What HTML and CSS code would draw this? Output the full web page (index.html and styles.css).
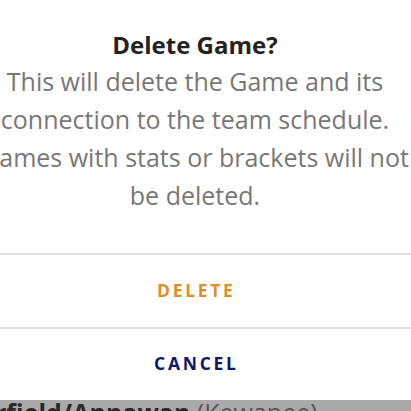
FILE: index.html
```html
<!DOCTYPE html>
<html lang="en">
<head>
<meta charset="utf-8">
<title>Delete Game?</title>
<link rel="stylesheet" href="styles.css">
</head>
<body>
<div class="dialog">
  <div class="content">
    <h2 class="title">Delete Game?</h2>
    <p class="message">This will delete the Game and its<br>connection to the team schedule.<br>Games with stats or brackets will not<br>be deleted.</p>
  </div>
  <div class="actions">
    <button class="action action-delete" type="button">DELETE</button>
    <button class="action action-cancel" type="button">CANCEL</button>
  </div>
</div>
<div class="behind">
  <span class="behind-name">rfield/Annawan</span> <span class="behind-note">(Kewanee)</span>
</div>
</body>
</html>
```

FILE: styles.css
```css
html, body {
  margin: 0;
  padding: 0;
  overflow: hidden;
  background: #ffffff;
}

body {
  font-family: "Open Sans", "Noto Sans", sans-serif;
  width: 411px;
  height: 411px;
}

.dialog {
  width: 460px;
  margin-left: -35px;
  background: #ffffff;
}

.content {
  padding: 30px 0 39px;
  text-align: center;
}

.title {
  margin: 0;
  font-size: 24px;
  line-height: 30px;
  font-weight: 700;
  color: #222222;
}

.message {
  margin: 2px 0 0;
  font-size: 25px;
  line-height: 38px;
  color: #777777;
  white-space: nowrap;
}

.actions {
  display: flex;
  flex-direction: column;
}

.action {
  display: block;
  width: 100%;
  height: 74px;
  margin: 0;
  padding: 0 0 3px;
  border: 0;
  border-top: 2px solid #dfe0e4;
  background: #ffffff;
  font-family: "Open Sans", "Noto Sans", sans-serif;
  font-size: 17.5px;
  font-weight: 700;
  letter-spacing: 2.7px;
  text-indent: 2.7px;
  text-align: center;
}

.action-delete {
  color: #e08e2c;
}

.action-cancel {
  height: 73px;
  color: #14146e;
}

.behind {
  background: #a9a9a9;
  height: 40px;
  margin-left: -5px;
  font-size: 25px;
  line-height: 24px;
  white-space: nowrap;
  color: #2a2a2a;
}

.behind-name {
  font-weight: 700;
}

.behind-note {
  color: #555555;
}
```
